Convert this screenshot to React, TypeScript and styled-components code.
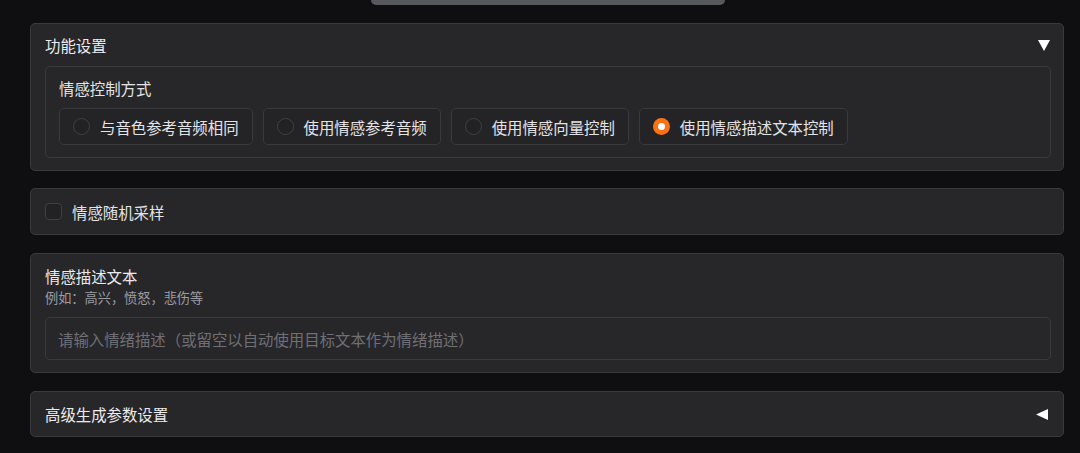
import React, { useState } from "react";
import styled, { createGlobalStyle } from "styled-components";

const GlobalStyle = createGlobalStyle`
  body {
    margin: 0;
    background: #0f0f11;
    font-family: "Noto Sans CJK SC", "Noto Sans", sans-serif;
    color: #e4e4e7;
  }
`;

const Page = styled.div`
  display: flex;
  flex-direction: column;
  gap: 18px;
  padding: 0 16px 16px 30px;
`;

const TopBar = styled.div`
  margin-left: 341px;
  width: 354px;
  height: 5px;
  background: #58585f;
  border-radius: 0 0 7px 7px;
`;

const Panel = styled.section<{ $pad?: string }>`
  background: #27272a;
  border: 1px solid #3a3a3e;
  border-radius: 5px;
  padding: ${(p) => p.$pad || "10px 13px 11px 14px"};
  display: flex;
  flex-direction: column;
`;

const Header = styled.div`
  display: flex;
  align-items: center;
  justify-content: space-between;
  height: 22px;
  font-size: 15.4px;
  color: #ececef;
`;

const Arrow = styled.svg`
  width: 12px;
  height: 11px;
  margin-right: 1px;
`;

const Block = styled.div`
  margin-top: 10px;
  border: 1px solid #3a3a3e;
  border-radius: 5px;
  padding: 11px 13px 12px 13px;
  display: flex;
  flex-direction: column;
  gap: 10px;
`;

const Label = styled.div`
  font-size: 15.4px;
  line-height: 20px;
  color: #e4e4e7;
`;

const Options = styled.div`
  display: flex;
  gap: 10px;
`;

const Option = styled.label`
  display: flex;
  align-items: center;
  gap: 10px;
  height: 37px;
  box-sizing: border-box;
  padding: 0 13px;
  border: 1px solid #3a3a3e;
  border-radius: 5px;
  background: #242427;
  font-size: 15.4px;
  color: #e4e4e7;
  cursor: pointer;
`;

const Radio = styled.span<{ $on: boolean }>`
  width: 17px;
  height: 17px;
  box-sizing: border-box;
  border-radius: 50%;
  border: ${(p) => (p.$on ? "none" : "1px solid #3f3f45")};
  background: ${(p) => (p.$on ? "#f97316" : "#222225")};
  display: flex;
  align-items: center;
  justify-content: center;
  &::after {
    content: "";
    display: ${(p) => (p.$on ? "block" : "none")};
    width: 7px;
    height: 7px;
    border-radius: 50%;
    background: #fff;
  }
`;

const CheckRow = styled.label`
  display: flex;
  align-items: center;
  gap: 10px;
  height: 25px;
  font-size: 15.4px;
  color: #e4e4e7;
  cursor: pointer;
`;

const Box = styled.span`
  width: 17px;
  height: 17px;
  box-sizing: border-box;
  border: 1px solid #3f3f45;
  border-radius: 4px;
  background: #222225;
`;

const Title = styled.div`
  font-size: 15.4px;
  line-height: 24px;
  color: #ececef;
`;

const Hint = styled.div`
  font-size: 13.2px;
  line-height: 20px;
  color: #9c9ca4;
`;

const Input = styled.input`
  margin-top: 9px;
  height: 43px;
  box-sizing: border-box;
  width: 100%;
  background: #27272a;
  border: 1px solid #3a3a3e;
  border-radius: 5px;
  padding: 0 12px;
  font-family: inherit;
  font-size: 15.4px;
  color: #e4e4e7;
  outline: none;
  &::placeholder {
    color: #6f6f76;
  }
`;

const modes = [
  "与音色参考音频相同",
  "使用情感参考音频",
  "使用情感向量控制",
  "使用情感描述文本控制",
];

export default function App() {
  const [mode, setMode] = useState(3);
  const [random, setRandom] = useState(false);

  return (
    <>
      <GlobalStyle />
      <Page>
        <TopBar />
        <Panel $pad="10px 12px 12px 14px">
          <Header>
            <span>功能设置</span>
            <Arrow viewBox="0 0 12 11">
              <polygon points="0,0 12,0 6,11" fill="#fff" />
            </Arrow>
          </Header>
          <Block>
            <Label>情感控制方式</Label>
            <Options>
              {modes.map((m, i) => (
                <Option key={m} onClick={() => setMode(i)}>
                  <Radio $on={mode === i} />
                  {m}
                </Option>
              ))}
            </Options>
          </Block>
        </Panel>
        <Panel $pad="10px 14px 10px 14px" style={{ marginTop: -1 }}>
          <CheckRow onClick={() => setRandom(!random)}>
            <Box />
            情感随机采样
          </CheckRow>
        </Panel>
        <Panel $pad="10px 12px 12px 14px">
          <Title>情感描述文本</Title>
          <Hint>例如：高兴，愤怒，悲伤等</Hint>
          <Input placeholder="请输入情绪描述（或留空以自动使用目标文本作为情绪描述）" />
        </Panel>
        <Panel $pad="11px 14px 11px 14px">
          <Header>
            <span>高级生成参数设置</span>
            <Arrow viewBox="0 0 12 11">
              <polygon points="12,0 12,11 0,5.5" fill="#fff" />
            </Arrow>
          </Header>
        </Panel>
      </Page>
    </>
  );
}
